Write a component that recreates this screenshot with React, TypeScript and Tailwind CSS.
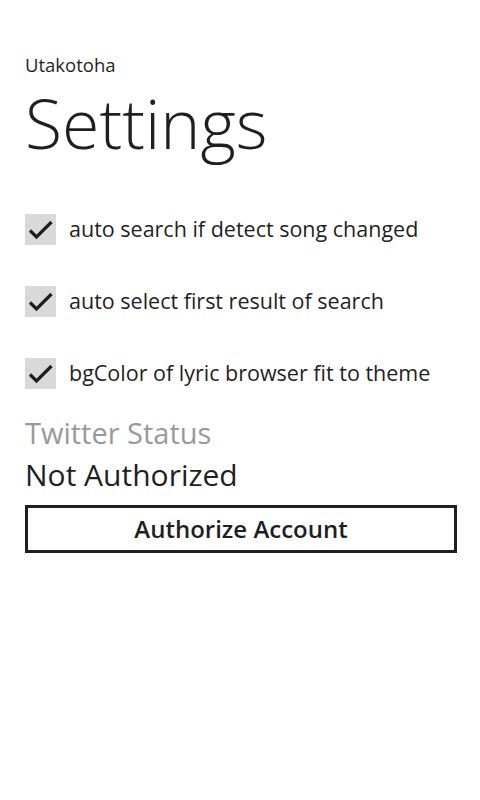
import React from 'react';

const font = { fontFamily: '"Open Sans", "Noto Sans", sans-serif' };

const options = [
  'auto search if detect song changed',
  'auto select first result of search',
  'bgColor of lyric browser fit to theme',
];

function CheckRow({ label }: { label: string }) {
  return (
    <div className="flex h-[72px] items-center">
      <div className="flex h-[31px] w-[31px] shrink-0 items-center justify-center bg-[#d9d9d9]">
        <svg width="31" height="31" viewBox="0 0 31 31" fill="none">
          <path d="M5 16.5 L11.5 23 L26.5 8" stroke="#1f1f1f" strokeWidth="3.2" />
        </svg>
      </div>
      <span className="ml-[13px] text-[21.5px] text-[#1f1f1f]">{label}</span>
    </div>
  );
}

export default function App() {
  return (
    <div className="min-h-[800px] w-[480px] bg-white pl-[25px] pr-[23px]" style={font}>
      <div className="pt-[53px] text-[18.5px] leading-[24px] text-[#1f1f1f]">Utakotoha</div>
      <h1 className="mt-[4px] text-[68px] font-light leading-[84px] text-[#1f1f1f]">Settings</h1>
      <div className="mt-[28px]">
        {options.map((o) => (
          <CheckRow key={o} label={o} />
        ))}
      </div>
      <div className="mt-[4px] text-[29px] leading-[40px] text-[#999999]">Twitter Status</div>
      <div className="text-[30px] leading-[44px] text-[#1f1f1f]">Not Authorized</div>
      <button className="mt-[8px] flex h-[48px] w-full items-center justify-center border-[3px] border-[#1f1f1f] text-[24px] font-semibold text-[#1f1f1f]">
        Authorize Account
      </button>
    </div>
  );
}
